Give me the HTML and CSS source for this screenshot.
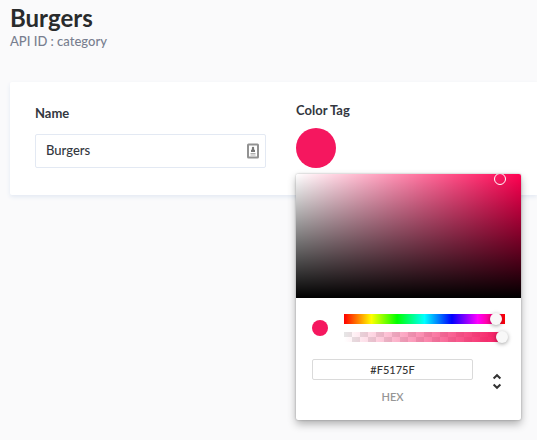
FILE: index.html
```html
<!DOCTYPE html>
<html lang="en">
<head>
<meta charset="utf-8">
<title>Burgers</title>
<link rel="stylesheet" href="styles.css">
</head>
<body>
<main class="page">
  <header class="page-header">
    <h1 class="title">Burgers</h1>
    <p class="subtitle">API ID : category</p>
  </header>
  <form class="card">
    <div class="field">
      <label class="label" for="name">Name</label>
      <div class="text-box">
        <input class="text-input" id="name" type="text" value="Burgers">
        <svg class="autofill" viewBox="0 0 12 16" width="12" height="16" aria-hidden="true">
          <rect x="1" y="1.5" width="10" height="13" rx="0.5" fill="#fff" stroke="#929292" stroke-width="2"/>
          <circle cx="6" cy="5" r="1.2" fill="#777"/>
          <path d="M5 5.500h2l.5 1.500H8V9H4V7h.5z" fill="#777"/>
          <path d="M3.500 10.500h5M3.500 12h5" stroke="#b0b0b0" stroke-width="1.2"/>
        </svg>
      </div>
    </div>
    <div class="field field-color">
      <label class="label label-color" for="swatch">Color Tag</label>
      <button class="swatch" id="swatch" type="button"></button>
      <div class="picker">
        <div class="saturation"><span class="pointer"></span></div>
        <div class="controls">
          <div class="row">
            <span class="preview"></span>
            <div class="sliders">
              <div class="track hue"><input class="range" type="range" min="0" max="360" value="346" aria-label="Hue"></div>
              <div class="track alpha"><input class="range" type="range" min="0" max="100" value="100" aria-label="Alpha"></div>
            </div>
          </div>
          <div class="row row-hex">
            <div class="hex">
              <input class="hex-input" id="hex" type="text" value="#F5175F">
              <label class="hex-label" for="hex">HEX</label>
            </div>
            <button class="toggle" type="button" aria-label="Change format">
              <svg viewBox="0 0 10 18" width="10" height="18" fill="none" stroke="#333" stroke-width="2">
                <path d="M1.600 6.500 5 3.200l3.400 3.300M1.600 12.500 5 15.800l3.400-3.300"/>
              </svg>
            </button>
          </div>
        </div>
      </div>
    </div>
  </form>
</main>
</body>
</html>
```
FILE: styles.css
```css
* {
  box-sizing: border-box;
}

body {
  margin: 0;
  background: #fafafb;
  color: #333740;
  font-family: Lato, sans-serif;
  font-size: 13px;
  font-weight: 500;
}

button,
input {
  font: inherit;
  color: inherit;
}

.page {
  min-height: 100vh;
  padding: 4px 0 0 10px;
}

.title {
  margin: 0;
  color: #292b2c;
  font-size: 24px;
  line-height: 28px;
}

.subtitle {
  margin: 0;
  color: #787e8f;
  line-height: 18px;
}

.card {
  display: grid;
  grid-template-columns: 1fr 1fr;
  gap: 30px;
  margin-top: 32px;
  padding: 22px 10px 27px 25px;
  background: #fff;
  border-radius: 2px 0 0 2px;
  box-shadow: 0 2px 4px #e3e9f3;
}

.field {
  display: flex;
  flex-direction: column;
  align-items: flex-start;
  gap: 12px;
}

.field-color {
  position: relative;
}

.label {
  font-weight: 700;
  line-height: 18px;
}

.label-color {
  line-height: 12px;
}

.text-box {
  display: flex;
  align-items: center;
  width: 100%;
  height: 34px;
  padding: 0 6px 0 10px;
  border: 1px solid #e3e9f3;
  border-radius: 2px;
}

.text-input {
  flex: 1;
  min-width: 0;
  padding: 0 0 2px;
  border: 0;
  outline: 0;
  background: none;
}

.swatch {
  flex: none;
  width: 40px;
  height: 40px;
  padding: 0;
  border: 0;
  border-radius: 50%;
  background: #f5175f;
}

.picker {
  position: absolute;
  top: 70px;
  left: 0;
  width: 225px;
  background: #fff;
  border-radius: 2px;
  box-shadow: 0 0 2px rgba(0, 0, 0, 0.3), 0 4px 8px rgba(0, 0, 0, 0.3);
}

.saturation {
  position: relative;
  height: 124px;
  overflow: hidden;
  border-radius: 2px 2px 0 0;
  background:
    linear-gradient(to top, #000, transparent),
    linear-gradient(to right, #fff, transparent),
    #ff0051;
}

.pointer {
  position: absolute;
  top: 4%;
  left: 90.6%;
  width: 12px;
  height: 12px;
  border: 1px solid #fff;
  border-radius: 50%;
  transform: translate(-50%, -50%);
}

.controls {
  padding: 16px;
}

.row {
  display: flex;
  align-items: center;
  gap: 16px;
}

.row-hex {
  align-items: flex-start;
  gap: 19px;
  margin-top: 17px;
}

.preview {
  width: 16px;
  height: 16px;
  border-radius: 50%;
  background: #f5175f;
}

.sliders {
  display: grid;
  flex: 1;
  gap: 8px;
}

.track {
  height: 10px;
}

.hue {
  background: linear-gradient(to right, #f00, #ff0 17%, #0f0 33%, #0ff 50%, #00f 67%, #f0f 83%, #f00);
}

.alpha {
  background:
    linear-gradient(to right, rgba(245, 23, 95, 0), #f5175f),
    repeating-conic-gradient(#fff 0 25%, #e6e6e6 0 50%) 0 0 / 16px 10px;
}

.range {
  display: block;
  width: calc(100% + 6px);
  height: 10px;
  margin: 0 -3px;
  appearance: none;
  background: none;
}

.range::-webkit-slider-thumb {
  appearance: none;
  width: 12px;
  height: 12px;
  border-radius: 50%;
  background: #f8f8f8;
  box-shadow: 0 1px 4px rgba(0, 0, 0, 0.37);
}

.hex {
  display: flex;
  flex: 1;
  flex-direction: column;
  gap: 10px;
  min-width: 0;
  text-align: center;
}

.hex-input {
  width: 100%;
  height: 21px;
  padding: 0;
  border: 1px solid #dadada;
  border-radius: 2px;
  color: #333;
  font-size: 11px;
  text-align: center;
}

.hex-label {
  color: #969696;
  font-size: 11px;
  font-weight: 600;
  line-height: 14px;
}

.toggle {
  display: flex;
  width: 10px;
  margin: 13px 3px 0 0;
  padding: 0;
  border: 0;
  background: none;
}

.toggle svg {
  flex: none;
}
```
